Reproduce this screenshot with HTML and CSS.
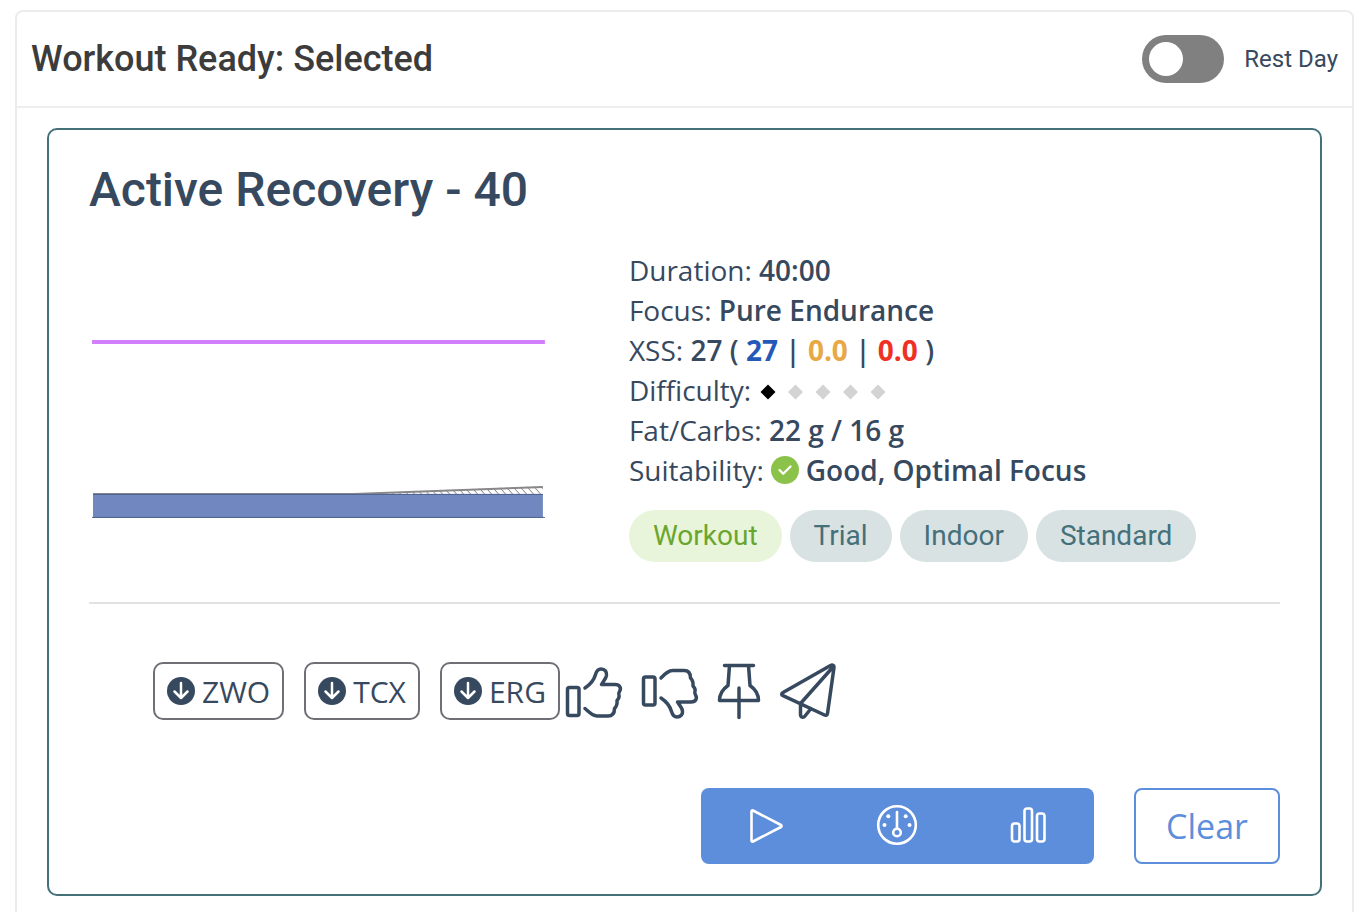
FILE: index.html
```
<!DOCTYPE html>
<html lang="en">
<head>
    <meta charset="UTF-8">
    <title>Workout Ready</title>
    <link rel="stylesheet" href="styles.css">
</head>
<body>
    <section class="panel">
        <header class="panel-header">
            <h1>Workout Ready: Selected</h1>
            <label class="rest-day">
                <input type="checkbox" class="switch" id="restDay">
                <span>Rest Day</span>
            </label>
        </header>

        <article class="workout">
            <h2>Active Recovery - 40</h2>

            <div class="summary">
                <div class="chart">
                    <svg viewBox="0 0 456 312" role="img" aria-label="Workout profile">
                        <defs>
                            <pattern id="hatch" width="7" height="8" patternUnits="userSpaceOnUse">
                                <path d="M0 0l7 8" stroke="#777" stroke-width="1"/>
                            </pattern>
                        </defs>
                        <path d="M3 92h453" stroke="#d17ffb" stroke-width="4"/>
                        <path d="M265 244L454 236v8z" fill="url(#hatch)"/>
                        <path d="M4 244h261L454 237" fill="none" stroke="#888" stroke-width="2"/>
                        <rect x="4" y="244" width="450" height="24" fill="#7087bf"/>
                        <path d="M4 244.500h450M3 267.500h453" stroke="#4d6290"/>
                    </svg>
                </div>

                <div class="details">
                    <p>Duration: <b>40:00</b></p>
                    <p>Focus: <b>Pure Endurance</b></p>
                    <p>XSS: <b>27 ( <span class="low">27</span> | <span class="high">0.0</span> | <span class="peak">0.0</span> )</b></p>
                    <p class="difficulty">Difficulty:
                        <svg width="126" height="16" viewBox="0 0 126 16" role="img" aria-label="Difficulty 1 of 5">
                            <path d="M8 2.500l7.500 7.500L8 17.500.5 10z" fill="#000"/>
                            <path d="M35.500 2.500L43 10l-7.500 7.500L28 10zM63 2.500L70.500 10 63 17.500 55.500 10zM90.500 2.500L98 10l-7.500 7.500L83 10zM118 2.500l7.500 7.500-7.500 7.500-7.500-7.500z" fill="#d3d3d3"/>
                        </svg>
                    </p>
                    <p>Fat/Carbs: <b>22 g / 16 g</b></p>
                    <p class="suitability">Suitability:
                        <svg width="28" height="28" viewBox="0 0 28 28" aria-hidden="true">
                            <circle cx="14" cy="14" r="14" fill="#8bc34a"/>
                            <path d="M8.500 14l3.700 3.700 7.300-7.200" fill="none" stroke="#fff" stroke-width="2.300" stroke-linecap="round" stroke-linejoin="round"/>
                        </svg>
                        <b>Good, Optimal Focus</b>
                    </p>
                    <div class="tags">
                        <span class="tag tag-green">Workout</span>
                        <span class="tag">Trial</span>
                        <span class="tag">Indoor</span>
                        <span class="tag">Standard</span>
                    </div>
                </div>
            </div>

            <div class="tools">
                <div class="downloads">
                    <button type="button" class="download">
                        <svg width="28" height="28" viewBox="0 0 28 28" aria-hidden="true"><circle cx="14" cy="14" r="14"/><path d="M14 6v15M7.500 14.500L14 21l6.500-6.500"/></svg>
                        ZWO
                    </button>
                    <button type="button" class="download">
                        <svg width="28" height="28" viewBox="0 0 28 28" aria-hidden="true"><circle cx="14" cy="14" r="14"/><path d="M14 6v15M7.500 14.500L14 21l6.500-6.500"/></svg>
                        TCX
                    </button>
                    <button type="button" class="download">
                        <svg width="28" height="28" viewBox="0 0 28 28" aria-hidden="true"><circle cx="14" cy="14" r="14"/><path d="M14 6v15M7.500 14.500L14 21l6.500-6.500"/></svg>
                        ERG
                    </button>
                </div>
                <div class="feedback">
                    <button type="button" class="icon-button" aria-label="Like">
                        <svg width="56" height="56" viewBox="0 0 56 56">
                            <rect x="1.500" y="24.500" width="11.500" height="28" rx="2"/>
                            <path d="M19 25c6-4 9-8 10.500-13.500C30.500 8 32 6 35 6c4 0 6 3 5.500 6.500-.5 3-3 5.500-5 9H49c5 0 6.500 4 4.500 7-1 1.500-1 2.500-.5 4 .5 2-.5 3.500-2 5 .5 4-.5 6-2.500 8 0 5-2.500 7.500-6.500 7.500H31c-5 0-8-4-12-7.500"/>
                        </svg>
                    </button>
                    <button type="button" class="icon-button" aria-label="Dislike">
                        <svg width="56" height="56" viewBox="0 0 56 56">
                            <rect x="1.500" y="14" width="11.500" height="28" rx="2"/>
                            <path d="M19 15c4-4 7-7.500 12-7.500h11c4 0 6.500 2.500 6.500 7.500 2 2 3 4 2.500 8 1.500 1.500 2.500 3 2 5-.5 1.500-.5 2.500.5 4 2 3 .5 7-4.500 7H35.500c2 3.500 4.500 5 5 9 .5 3.500-2 6-5.500 6-3 0-4.500-2-5.500-5.500C28 43 25 39 19 35"/>
                        </svg>
                    </button>
                    <button type="button" class="icon-button" aria-label="Pin">
                        <svg width="42" height="56" viewBox="0 0 42 56">
                            <path d="M6.500 2.500h29M11.500 2.500L10 22.500C5 26 1.500 31 1.500 37.500h39C40.500 31 37 26 32 22.500L30.500 2.500M21 25v29.500"/>
                        </svg>
                    </button>
                    <button type="button" class="icon-button" aria-label="Send">
                        <svg width="56" height="56" viewBox="0 0 56 56">
                            <path d="M50.500 2.500L3 29.500c-2 1-1.500 2.500 0 3.200L44.500 52c1.500.7 2.800 0 3-1.500L54 4.500c.3-2-1.500-3-3.500-2zM53 4L20.500 40.500M20.500 41v10.500c0 3 3 3.500 4.500 1.500l6-7.500"/>
                        </svg>
                    </button>
                </div>
            </div>

            <footer class="actions">
                <div class="button-group">
                    <button type="button" aria-label="Play">
                        <svg width="40" height="40" viewBox="0 0 40 40"><path d="M5.500 6.500v29q0 1.500 1.500 1L35 22q1-1 0-2L7 5.500q-1.500-.5-1.500 1z"/></svg>
                    </button>
                    <button type="button" aria-label="Dashboard">
                        <svg width="40" height="40" viewBox="0 0 40 40">
                            <circle cx="20" cy="20" r="18.800"/>
                            <circle cx="20" cy="27.500" r="3.800"/>
                            <path d="M20 7v16.500"/>
                            <g class="dots"><circle cx="7.500" cy="20" r="2"/><circle cx="11.300" cy="11.300" r="2"/><circle cx="28.700" cy="11.300" r="2"/><circle cx="32.500" cy="20" r="2"/></g>
                        </svg>
                    </button>
                    <button type="button" aria-label="Statistics">
                        <svg width="40" height="40" viewBox="0 0 40 40"><rect x="4" y="18.500" width="7.500" height="18" rx="2.500"/><rect x="16.500" y="3.500" width="7.500" height="33" rx="2.500"/><rect x="29" y="8.500" width="7.500" height="28" rx="2.500"/></svg>
                    </button>
                </div>
                <button type="button" class="clear">Clear</button>
            </footer>
        </article>
    </section>
</body>
</html>
```
FILE: styles.css
```
* {
    box-sizing: border-box;
}

body {
    margin: 10px 10px 0 15px;
    font-family: "Open Sans", sans-serif;
    font-size: 28px;
    line-height: 40px;
    color: #37495e;
    background-color: #fff;
}

h1, h2, p {
    margin: 0;
}

button {
    margin: 0;
    padding: 0;
    font-family: inherit;
    color: inherit;
    background: none;
    border: none;
    cursor: pointer;
}

svg {
    display: block;
    overflow: visible;
}

.panel {
    padding-bottom: 30px;
    border: 2px solid #ececee;
    border-radius: 8px;
}

.panel-header {
    display: flex;
    justify-content: space-between;
    align-items: center;
    height: 96px;
    padding: 0 14px;
    border-bottom: 2px solid #eeeef0;
}

h1 {
    font-family: Roboto, sans-serif;
    font-size: 36px;
    font-weight: 500;
    line-height: 42px;
    color: #3c3c3c;
}

.rest-day {
    display: flex;
    align-items: center;
    gap: 20px;
    font-family: Roboto, sans-serif;
    font-size: 24px;
}

.switch {
    appearance: none;
    width: 82px;
    height: 48px;
    margin: 0;
    padding: 7px;
    background-color: #808080;
    border-radius: 24px;
    cursor: pointer;
}

.switch::before {
    content: "";
    display: block;
    width: 34px;
    height: 34px;
    background-color: #fff;
    border-radius: 50%;
}

.switch:checked {
    background-color: #5d8edb;
}

.switch:checked::before {
    margin-left: auto;
}

.workout {
    margin: 20px 30px 0;
    padding: 30px 40px;
    border: 2px solid #44707a;
    border-radius: 10px;
}

h2 {
    font-family: Roboto, sans-serif;
    font-size: 48px;
    font-weight: 500;
    line-height: 60px;
}

.summary {
    display: grid;
    grid-template-columns: 34fr 41fr;
    padding: 30px 0 40px;
    border-bottom: 2px solid #e2e2e2;
}

.chart {
    padding-right: 84px;
}

.chart svg {
    width: 100%;
}

.details b {
    font-weight: 600;
}

.details .low,
.details .high,
.details .peak {
    font-weight: 700;
}

.low {
    color: #2459b8;
}

.high {
    color: #e8a845;
}

.peak {
    color: #ee3124;
}

.difficulty,
.suitability {
    display: flex;
    align-items: center;
    gap: 7px;
}

.difficulty {
    gap: 9px;
}

.tags {
    display: flex;
    gap: 8px;
    margin-top: 20px;
}

.tag {
    padding: 6px 24px;
    font-family: Roboto, sans-serif;
    color: #44707a;
    background-color: #d9e2e3;
    border-radius: 26px;
}

.tag-green {
    color: #6aa62e;
    background-color: #e8f5da;
}

.tools {
    display: flex;
    align-items: center;
    gap: 6px;
    padding: 58px 64px 68px;
}

.downloads,
.feedback {
    display: flex;
    gap: 20px;
}

.download {
    display: flex;
    align-items: center;
    gap: 7px;
    height: 58px;
    padding: 0 12px;
    font-size: 30px;
    border: 2px solid #6f6f76;
    border-radius: 10px;
}

.download circle {
    fill: #37495e;
}

.download path {
    fill: none;
    stroke: #fff;
    stroke-width: 2.5;
    stroke-linecap: round;
    stroke-linejoin: round;
}

.icon-button svg {
    fill: none;
    stroke: #37495e;
    stroke-width: 3.5;
    stroke-linecap: round;
    stroke-linejoin: round;
}

.actions {
    display: flex;
    justify-content: flex-end;
    gap: 40px;
}

.button-group {
    display: flex;
    background-color: #5d8edb;
    border-radius: 8px;
}

.button-group button {
    display: flex;
    justify-content: center;
    align-items: center;
    width: 131px;
    height: 76px;
    padding: 0 2px 2px 0;
}

.button-group svg {
    fill: none;
    stroke: #fff;
    stroke-width: 2.6;
    stroke-linejoin: round;
    stroke-linecap: round;
}

.button-group .dots {
    fill: #fff;
    stroke: none;
}

.clear {
    height: 76px;
    padding: 0 30px;
    font-size: 34px;
    color: #5d8edb;
    border: 2px solid #5d8edb;
    border-radius: 8px;
}
```
